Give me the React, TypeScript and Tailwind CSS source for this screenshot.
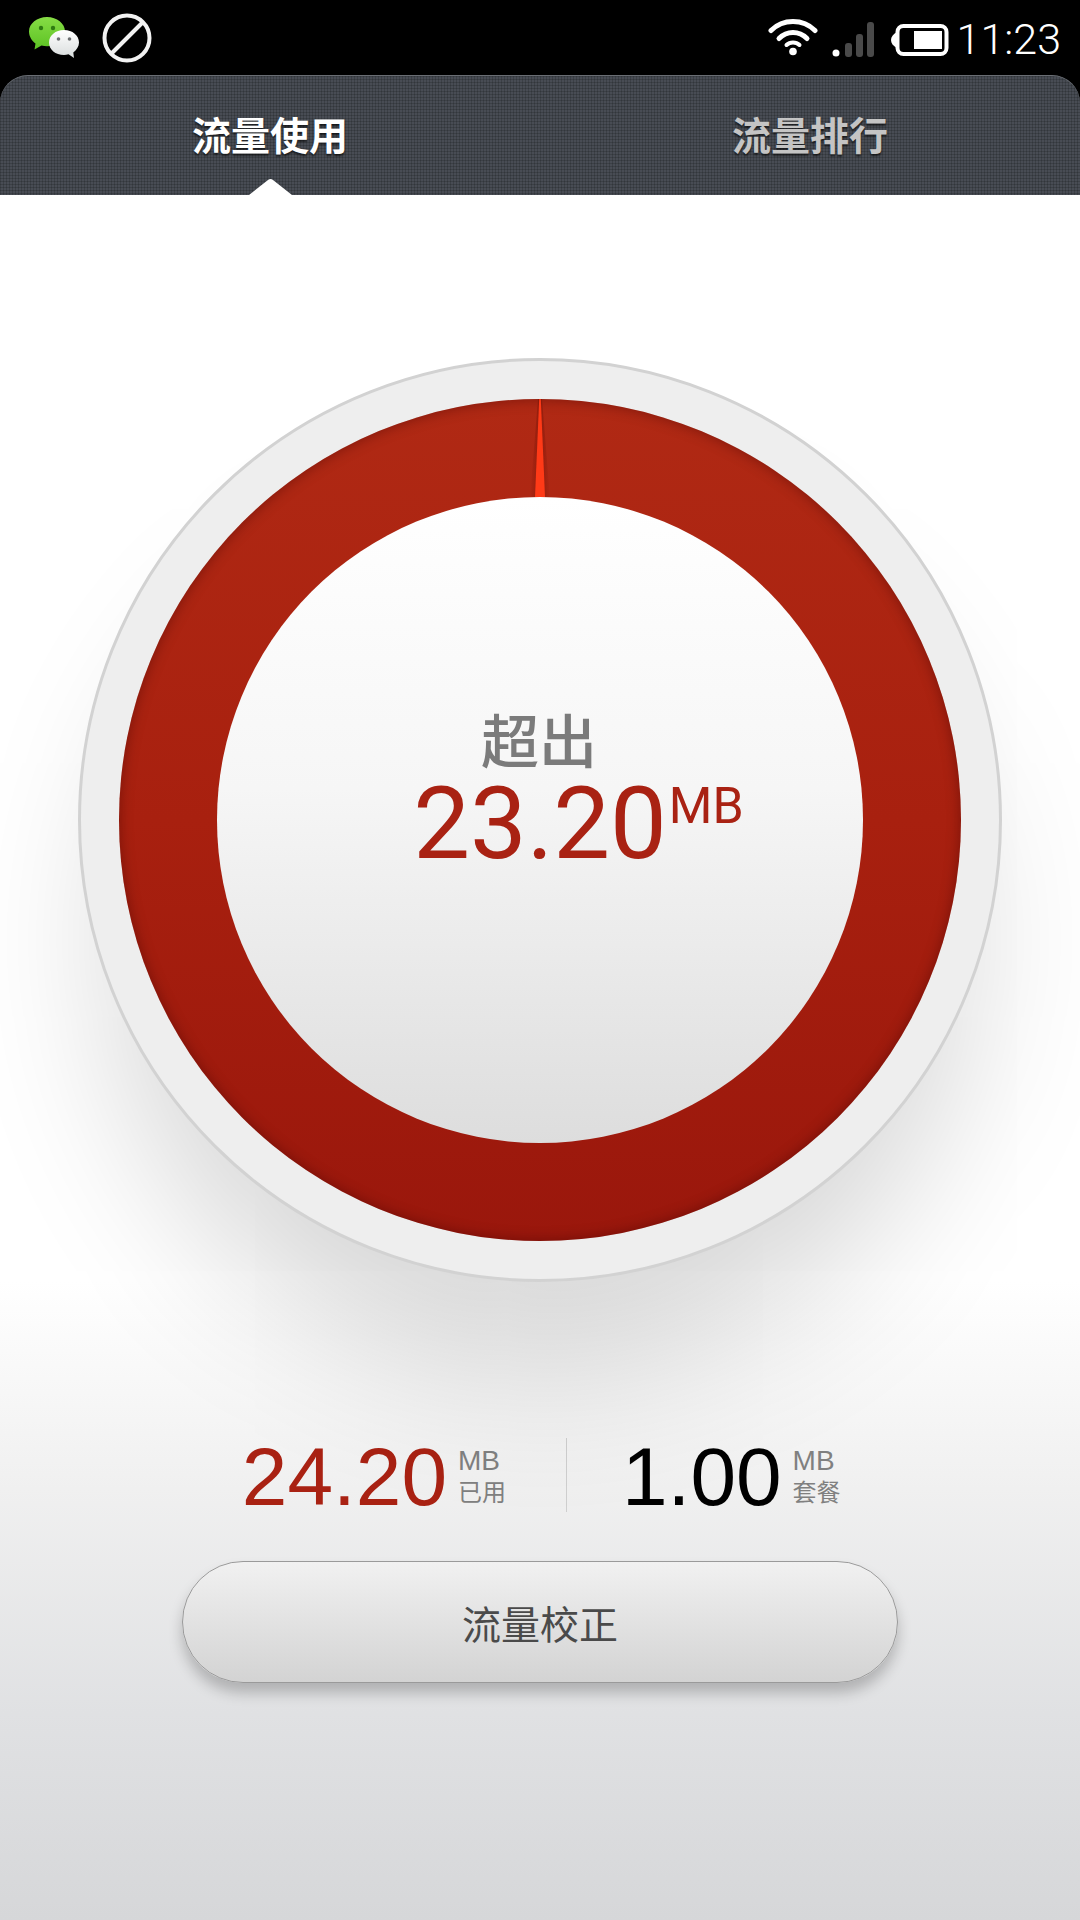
import React from "react";

const cjk = "font-['Noto_Sans_CJK_SC','Noto_Sans',sans-serif]";

const WeChatIcon = () => (
  <svg width="52" height="44" viewBox="0 0 52 44">
    <defs>
      <linearGradient id="wechat-green" x1="0" x2="0" y1="0" y2="1">
        <stop offset="0" stopColor="#86dc45" />
        <stop offset="1" stopColor="#5cc223" />
      </linearGradient>
      <linearGradient id="wechat-white" x1="0" x2="0" y1="0" y2="1">
        <stop offset="0" stopColor="#ffffff" />
        <stop offset="1" stopColor="#d8dcdc" />
      </linearGradient>
    </defs>
    <path d="M18 1C8 1 0 7.500 0 15.500 0 20.500 3 25 6.500 27.500L5.500 33.500 12.500 29.500C14.500 30 16 30.200 18 30.200 28 30.200 36 23.500 36 15.500 36 7.500 28 1 18 1Z" fill="url(#wechat-green)" />
    <path d="M35 14C26.500 14 20 19.500 20 26.500 20 33.500 26.500 39 35 39 36.500 39 38 38.800 39.500 38.300L45 42 44.300 36.500C47.500 34 50 30.500 50 26.500 50 19.500 43.500 14 35 14Z" fill="url(#wechat-white)" />
    <circle cx="12" cy="12" r="2.200" fill="#2f7a12" />
    <circle cx="24" cy="12" r="2.200" fill="#2f7a12" />
    <circle cx="29.500" cy="23" r="1.800" fill="#6d7072" />
    <circle cx="40.500" cy="23" r="1.800" fill="#6d7072" />
  </svg>
);

const BanIcon = () => (
  <svg width="50" height="50" viewBox="0 0 50 50" fill="none" stroke="#f2f2f2" strokeWidth="4">
    <circle cx="25" cy="25" r="22.500" />
    <path d="M9 41L41 9" />
  </svg>
);

const WifiIcon = () => (
  <svg width="50" height="38" viewBox="0 0 50 38" fill="none" stroke="#fff" strokeWidth="5" strokeLinecap="round">
    <path d="M3 12.500C15 0.500 35 0.500 47 12.500" />
    <path d="M11 20.500C19 12.500 31 12.500 39 20.500" />
    <path d="M18.500 27C22 23.500 28 23.500 31.500 27" strokeWidth="4" />
    <circle cx="25" cy="33.500" r="3.800" fill="#fff" stroke="none" />
  </svg>
);

const SignalIcon = () => (
  <svg width="42" height="36" viewBox="0 0 42 36">
    <circle cx="4" cy="31" r="3.500" fill="#fff" />
    <rect x="13" y="21" width="7" height="14" rx="3" fill="#4a4a4a" />
    <rect x="24" y="12" width="7" height="23" rx="3" fill="#4a4a4a" />
    <rect x="35" y="0" width="7" height="35" rx="3" fill="#4a4a4a" />
  </svg>
);

const BatteryIcon = () => (
  <svg width="58" height="32" viewBox="0 0 58 32">
    <path d="M6 8C2 10 0 13 0 16 0 19 2 22 6 24Z" fill="#fff" />
    <rect x="6.500" y="2" width="49" height="28" rx="6" fill="none" stroke="#fff" strokeWidth="4" />
    <rect x="23" y="7" width="28" height="18" fill="#fff" />
  </svg>
);

const StatusBar = () => (
  <div className="flex h-[75px] items-center bg-black pl-[29px] pr-[19px]">
    <WeChatIcon />
    <div className="ml-[21px]">
      <BanIcon />
    </div>
    <div className="ml-auto flex items-center">
      <div className="-mt-[2px]">
        <WifiIcon />
      </div>
      <div className="ml-[14px] mt-[4px]">
        <SignalIcon />
      </div>
      <div className="ml-[17px] mt-[5px]">
        <BatteryIcon />
      </div>
      <span className="ml-[8px] mt-[4px] font-['Roboto',sans-serif] text-[43px] font-light leading-none text-white">
        11:23
      </span>
    </div>
  </div>
);

const Tabs = () => (
  <div className="bg-black">
    <div className="relative grid h-[120px] grid-cols-2 rounded-t-[28px] border-t border-t-[#6a6e74] bg-[#484c54] bg-[linear-gradient(rgba(0,0,0,0.16)_1px,transparent_1px),linear-gradient(90deg,rgba(0,0,0,0.16)_1px,transparent_1px)] bg-[size:3px_3px]">
      <div className={`flex items-center justify-center pb-[5px] text-[39px] font-bold text-white [text-shadow:0_2px_2px_rgba(0,0,0,0.6)] ${cjk}`}>
        流量使用
      </div>
      <div className={`flex items-center justify-center pb-[5px] text-[39px] font-bold text-[#c4c4c4] [text-shadow:0_2px_2px_rgba(0,0,0,0.6)] ${cjk}`}>
        流量排行
      </div>
      <svg className="absolute bottom-0 left-[249px]" width="43" height="17" viewBox="0 0 43 17">
        <path d="M0 17L19 2Q21.500 0 24 2L43 17Z" fill="#fff" />
      </svg>
    </div>
  </div>
);

const Dial = () => (
  <div className="relative flex h-[924px] w-[924px] items-center justify-center rounded-full border-[3px] border-[#d2d2d2] bg-[#eeeeee] shadow-[0_120px_150px_-30px_rgba(0,0,0,0.16)]">
    <div className="relative flex h-[842px] w-[842px] items-center justify-center rounded-full bg-[linear-gradient(#b02914,#a8200f_50%,#9a170c)] shadow-[inset_0_0_14px_rgba(60,0,0,0.45)]">
      <svg className="absolute left-[411px] top-0" width="20" height="98" viewBox="0 0 20 98">
        <defs>
          <linearGradient id="spike-shade" x1="0" x2="1" y1="0" y2="0">
            <stop offset="0" stopColor="#7a1408" stopOpacity="0" />
            <stop offset="0.5" stopColor="#7a1408" stopOpacity="0.6" />
            <stop offset="1" stopColor="#7a1408" stopOpacity="0" />
          </linearGradient>
        </defs>
        <path d="M8 0H12L20 98H0Z" fill="url(#spike-shade)" />
        <path d="M9.200 0H10.800L15 98H5Z" fill="#ff3a17" />
      </svg>
      <div className="flex h-[646px] w-[646px] flex-col items-center rounded-full bg-[linear-gradient(#ffffff,#f6f6f6_45%,#dddddd)] pt-[205px]">
        <div className={`-ml-[2px] text-[58px] font-medium leading-[72px] text-[#7b7b7b] ${cjk}`}>超出</div>
        <div className="relative font-['Roboto',sans-serif] text-[101px] leading-[100px] text-[#a92213]">
          23.20
          <span className="absolute left-full top-[-3px] ml-[2px] text-[50px] leading-[70px]">MB</span>
        </div>
      </div>
    </div>
  </div>
);

const Stat = ({ value, unit, label, color }: { value: string; unit: string; label: string; color: string }) => (
  <div className="flex items-center">
    <span className={`pt-[4px] font-['Liberation_Sans',sans-serif] text-[82px] leading-none ${color}`}>{value}</span>
    <div className="ml-[11px] flex flex-col text-[#808080]">
      <span className="font-['Liberation_Sans',sans-serif] text-[28px] leading-[32px]">{unit}</span>
      <span className={`text-[24px] leading-[28px] ${cjk}`}>{label}</span>
    </div>
  </div>
);

export default function App() {
  return (
    <div className="flex h-[1920px] w-[1080px] flex-col overflow-hidden bg-white">
      <StatusBar />
      <Tabs />
      <div className="flex flex-1 flex-col items-center bg-[linear-gradient(#ffffff_63%,#f0f0f0_75%,#e0e1e3_88%,#d6d7d9)] pt-[163px]">
        <Dial />
        <div className="mt-[156px] flex h-[74px] w-full items-center">
          <div className="flex w-[566px] justify-end pr-[60px]">
            <Stat value="24.20" unit="MB" label="已用" color="text-[#a92213]" />
          </div>
          <div className="h-full w-px bg-[#cfcfcf]" />
          <div className="flex flex-1 justify-start pl-[55px]">
            <Stat value="1.00" unit="MB" label="套餐" color="text-black" />
          </div>
        </div>
        <button className={`mt-[49px] h-[122px] w-[716px] rounded-full border border-[#9a9a9a] bg-[linear-gradient(#f1f1f1,#d3d3d3)] text-[39px] text-[#4a4a4a] shadow-[0_10px_14px_rgba(0,0,0,0.22)] ${cjk}`}>
          流量校正
        </button>
      </div>
    </div>
  );
}
